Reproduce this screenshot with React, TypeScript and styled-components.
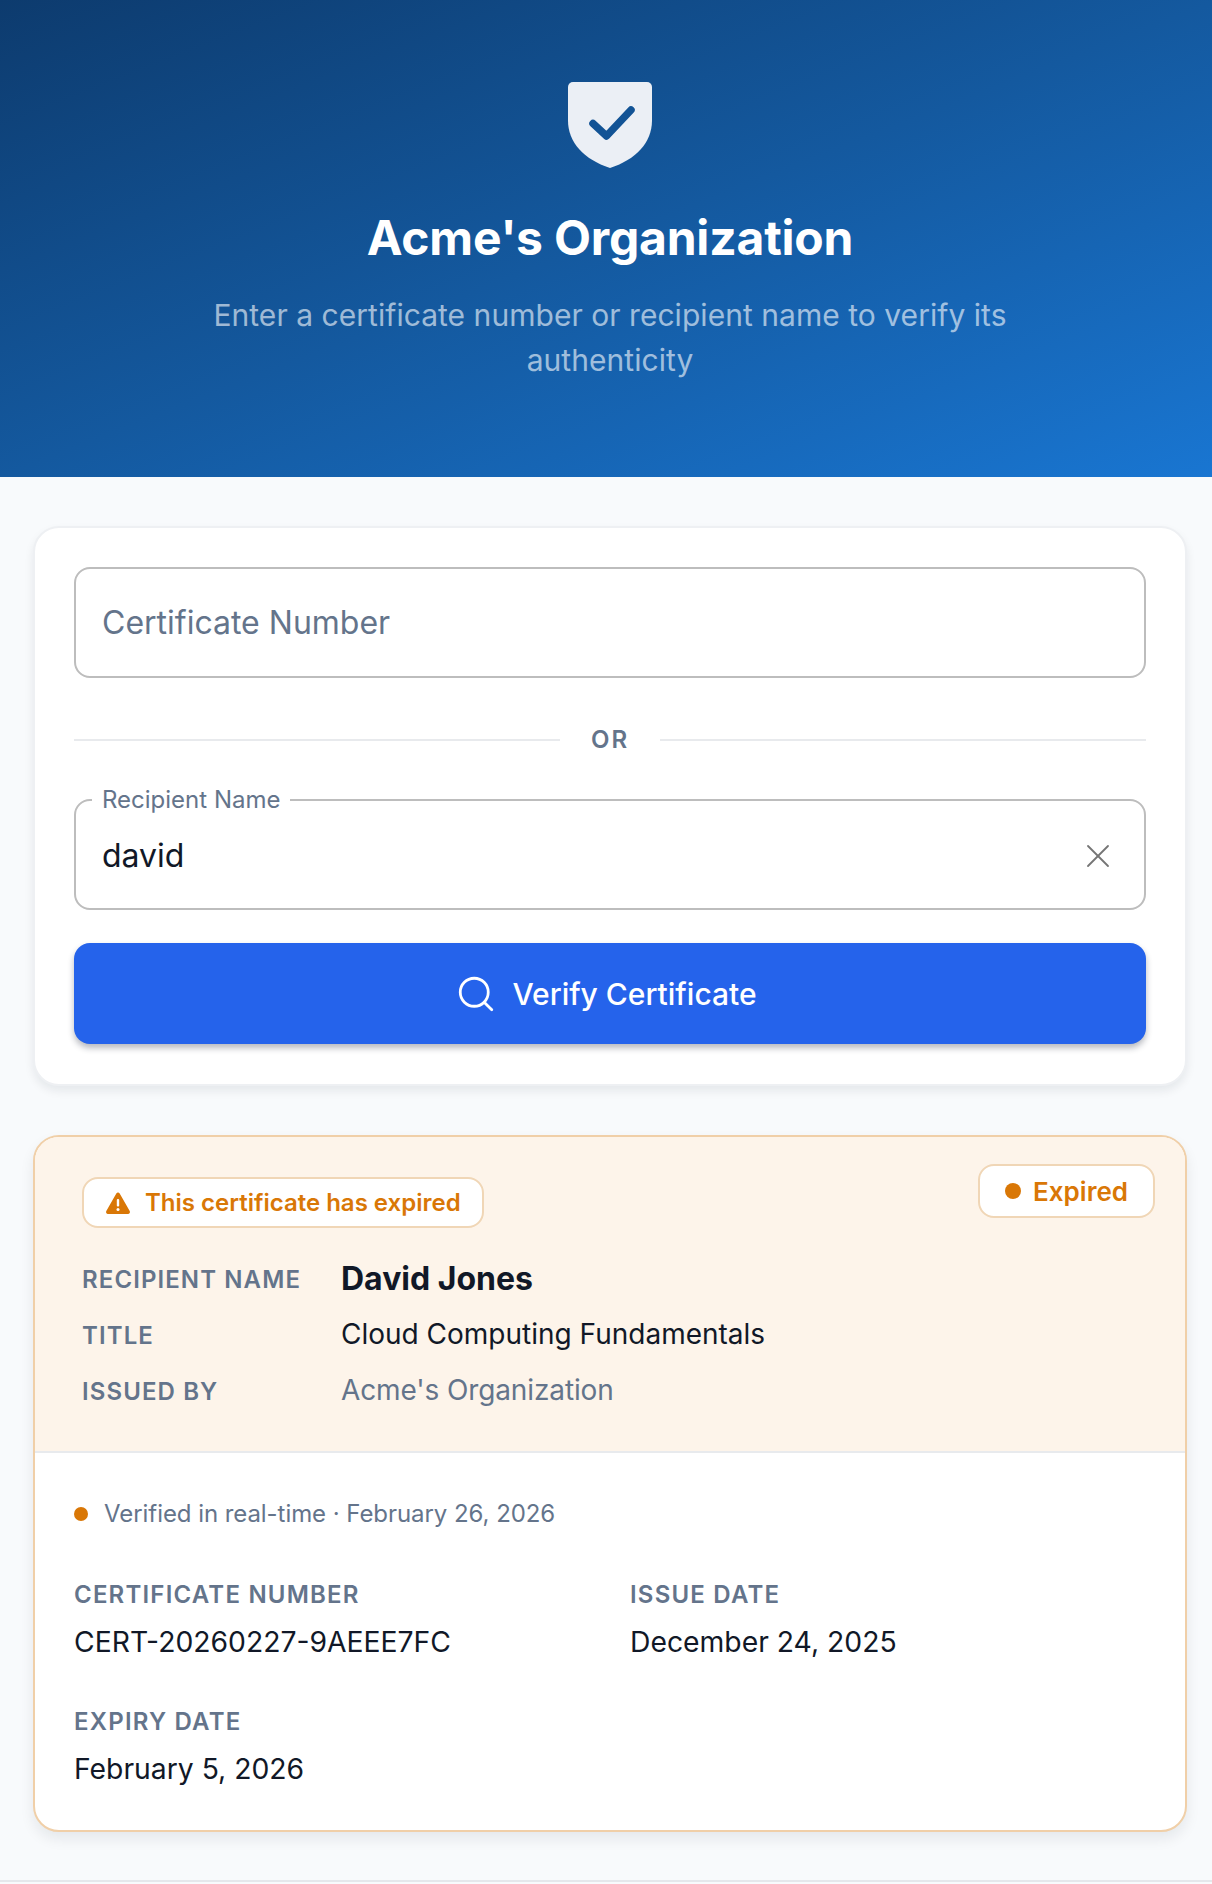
import { createGlobalStyle, styled } from "styled-components";
import { Search, X } from "lucide-react";

const GlobalStyle = createGlobalStyle`
  * {
    box-sizing: border-box;
  }

  html,
  body {
    overflow-x: hidden;
  }

  body {
    margin: 0;
    background: #f8fafc;
    font-family: Inter, "Liberation Sans", sans-serif;
    color: #111827;
  }
`;

const Page = styled.div`
  width: 1220px;
  height: 1884px;
  overflow: hidden;
`;

const Hero = styled.header`
  height: 477px;
  padding-top: 81px;
  display: flex;
  flex-direction: column;
  align-items: center;
  background: linear-gradient(to bottom right, #0d3b6e 0%, #14599f 50%, #1976d2 100%);
`;

const ShieldIcon = styled.svg`
  width: 86px;
  height: 88px;
  display: block;
`;

const Title = styled.h1`
  margin: 40px 0 0;
  font-size: 48px;
  line-height: 58px;
  font-weight: 700;
  color: #fff;
  letter-spacing: -0.2px;
`;

const Subtitle = styled.p`
  margin: 26px 0 0;
  width: 860px;
  text-align: center;
  font-size: 30px;
  line-height: 45px;
  letter-spacing: 0.04px;
  color: rgba(255, 255, 255, 0.6);
`;

const Main = styled.main`
  padding: 49px 33px 0;
  display: flex;
  flex-direction: column;
  gap: 49px;
`;

const SearchCard = styled.section`
  background: #fff;
  border: 2px solid #eef0f3;
  border-radius: 26px;
  padding: 39px 39px 40px;
  box-shadow: 0 5px 10px rgba(15, 23, 42, 0.08);
`;

// the legend sits on the top border, so the notched box starts 12px higher
const Outline = styled.fieldset<{ $notched?: boolean }>`
  margin: ${(p) => (p.$notched ? "-12px 0 0" : "0")};
  padding: ${(p) => (p.$notched ? "0 26px 10px 26px" : "0 26px")};
  height: ${(p) => (p.$notched ? "123px" : "111px")};
  border: 2px solid #bdbdbd;
  border-radius: 16px;
  display: flex;
  align-items: center;
  min-width: 0;
`;

const OutlineLabel = styled.legend`
  padding: 0 10px;
  margin-left: -10px;
  font-size: 24px;
  line-height: 26px;
  color: #64748b;
`;

const TextInput = styled.input`
  flex: 1;
  min-width: 0;
  border: 0;
  outline: 0;
  padding: 0;
  background: transparent;
  font-family: inherit;
  font-size: 32px;
  color: #111827;

  &::placeholder {
    color: #64748b;
    opacity: 1;
  }
`;

const ClearButton = styled.button`
  width: 40px;
  height: 40px;
  border: 0;
  padding: 0;
  background: transparent;
  color: #757575;
  display: flex;
  align-items: center;
  justify-content: center;
`;

const Divider = styled.div`
  margin: 47px 0 44px;
  display: flex;
  align-items: center;
  gap: 31px;
  font-size: 24px;
  line-height: 30px;
  font-weight: 600;
  letter-spacing: 2px;
  color: #64748b;

  &::before,
  &::after {
    content: "";
    flex: 1;
    height: 2px;
    background: #e8eaed;
  }
`;

const VerifyButton = styled.button`
  width: 100%;
  height: 101px;
  margin-top: 33px;
  padding: 0 8px 0 0;
  border: 0;
  border-radius: 16px;
  background: #2563eb;
  color: #fff;
  font-family: inherit;
  font-size: 30px;
  font-weight: 500;
  display: flex;
  align-items: center;
  justify-content: center;
  gap: 15px;
  box-shadow: 0 4px 6px rgba(15, 23, 42, 0.3);
`;

const ResultCard = styled.section`
  position: relative;
  background: #fff;
  border: 2px solid #f0cfa8;
  border-radius: 26px;
  overflow: hidden;
  box-shadow: 0 7px 14px rgba(15, 23, 42, 0.08);
`;

const StatusPanel = styled.div`
  height: 316px;
  padding: 40px 47px 0;
  background: #fdf4ea;
  border-bottom: 2px solid #e8eaed;
`;

const Badge = styled.span`
  display: inline-flex;
  align-items: center;
  background: #fff;
  border: 2px solid #f0d6b6;
  border-radius: 16px;
  color: #d97706;
  font-weight: 600;
`;

const AlertBadge = styled(Badge)`
  height: 51px;
  padding: 0 21px 0 21px;
  gap: 14px;
  font-size: 24px;
`;

const StateBadge = styled(Badge)`
  position: absolute;
  top: 27px;
  right: 30px;
  height: 54px;
  padding: 0 25px;
  gap: 12px;
  font-size: 26px;
`;

const Dot = styled.span<{ $size: number }>`
  width: ${(p) => p.$size}px;
  height: ${(p) => p.$size}px;
  border-radius: 50%;
  background: #d97706;
  flex: none;
`;

const FactRow = styled.div`
  display: grid;
  grid-template-columns: 259px 1fr;
  align-items: center;
  height: 56px;

  &:first-of-type {
    margin-top: 22px;
  }
`;

const FactLabel = styled.span`
  padding-top: 3px;
  font-size: 24px;
  font-weight: 600;
  letter-spacing: 1.1px;
  text-transform: uppercase;
  color: #64748b;
`;

const FactValue = styled.span<{ $variant?: "name" | "muted" }>`
  font-size: ${(p) => (p.$variant === "name" ? "32px" : "28px")};
  font-weight: ${(p) => (p.$variant === "name" ? 700 : 400)};
  letter-spacing: ${(p) => (p.$variant === "muted" ? "-0.12px" : "0")};
  color: ${(p) => (p.$variant === "muted" ? "#64748b" : "#111827")};
`;

const DetailPanel = styled.div`
  padding: 45px 39px 43px;
`;

const VerifiedLine = styled.div`
  display: flex;
  align-items: center;
  gap: 16px;
  font-size: 24px;
  line-height: 32px;
  letter-spacing: -0.06px;
  color: #64748b;
`;

const DetailGrid = styled.dl`
  margin: 50px 0 0;
  display: grid;
  grid-template-columns: 1fr 1fr;
  column-gap: 40px;
  row-gap: 47px;
`;

const DetailItem = styled.div`
  display: flex;
  flex-direction: column;
  gap: 14px;
`;

const DetailLabel = styled.dt`
  font-size: 24px;
  line-height: 30px;
  font-weight: 600;
  letter-spacing: 1.2px;
  text-transform: uppercase;
  color: #64748b;
`;

const DetailValue = styled.dd`
  margin: 0;
  font-size: 28.3px;
  line-height: 36px;
  font-weight: 400;
  color: #111827;
`;

const Footer = styled.div`
  margin-top: 48px;
  border-top: 2px solid #e5e7eb;
  height: 6px;
`;

function Shield() {
  return (
    <ShieldIcon viewBox="0 0 86 88" aria-hidden="true">
      <path
        d="M6 1h74a5 5 0 0 1 5 5v33.500c0 22-16 39-42 47.500C17 78.500 1 61.500 1 39.500V6a5 5 0 0 1 5-5z"
        fill="#ebeff5"
      />
      <path
        d="M26 42.500 39.500 55 64 29"
        fill="none"
        stroke="#125395"
        strokeWidth="7.500"
        strokeLinecap="round"
        strokeLinejoin="round"
      />
    </ShieldIcon>
  );
}

function WarningIcon() {
  return (
    <svg width="26" height="24" viewBox="0 0 26 24" aria-hidden="true">
      <path
        d="M13 1.500c.7 0 1.300.4 1.700 1l10 17.500c.8 1.400-.2 3-1.700 3H3c-1.500 0-2.500-1.600-1.700-3l10-17.500c.4-.6 1-1 1.700-1z"
        fill="#d97706"
      />
      <rect x="11.800" y="8" width="2.400" height="7.500" rx="1" fill="#fff" />
      <circle cx="13" cy="18.500" r="1.500" fill="#fff" />
    </svg>
  );
}

export default function App() {
  return (
    <Page>
      <GlobalStyle />
      <Hero>
        <Shield />
        <Title>Acme's Organization</Title>
        <Subtitle>
          Enter a certificate number or recipient name to verify its authenticity
        </Subtitle>
      </Hero>
      <Main>
        <SearchCard>
          <Outline>
            <TextInput placeholder="Certificate Number" readOnly />
          </Outline>
          <Divider>OR</Divider>
          <Outline $notched>
            <OutlineLabel>Recipient Name</OutlineLabel>
            <TextInput value="david" readOnly />
            <ClearButton type="button" aria-label="Clear">
              <X size={40} strokeWidth={1.100} />
            </ClearButton>
          </Outline>
          <VerifyButton type="button">
            <Search size={42} strokeWidth={1.600} />
            Verify Certificate
          </VerifyButton>
        </SearchCard>
        <ResultCard>
          <StatusPanel>
            <AlertBadge>
              <WarningIcon />
              This certificate has expired
            </AlertBadge>
            <FactRow>
              <FactLabel>Recipient Name</FactLabel>
              <FactValue $variant="name">David Jones</FactValue>
            </FactRow>
            <FactRow>
              <FactLabel>Title</FactLabel>
              <FactValue>Cloud Computing Fundamentals</FactValue>
            </FactRow>
            <FactRow>
              <FactLabel>Issued By</FactLabel>
              <FactValue $variant="muted">Acme's Organization</FactValue>
            </FactRow>
          </StatusPanel>
          <StateBadge>
            <Dot $size={16} />
            Expired
          </StateBadge>
          <DetailPanel>
            <VerifiedLine>
              <Dot $size={14} />
              Verified in real-time · February 26, 2026
            </VerifiedLine>
            <DetailGrid>
              <DetailItem>
                <DetailLabel>Certificate Number</DetailLabel>
                <DetailValue>CERT-20260227-9AEEE7FC</DetailValue>
              </DetailItem>
              <DetailItem>
                <DetailLabel>Issue Date</DetailLabel>
                <DetailValue>December 24, 2025</DetailValue>
              </DetailItem>
              <DetailItem>
                <DetailLabel>Expiry Date</DetailLabel>
                <DetailValue>February 5, 2026</DetailValue>
              </DetailItem>
            </DetailGrid>
          </DetailPanel>
        </ResultCard>
      </Main>
      <Footer />
    </Page>
  );
}
